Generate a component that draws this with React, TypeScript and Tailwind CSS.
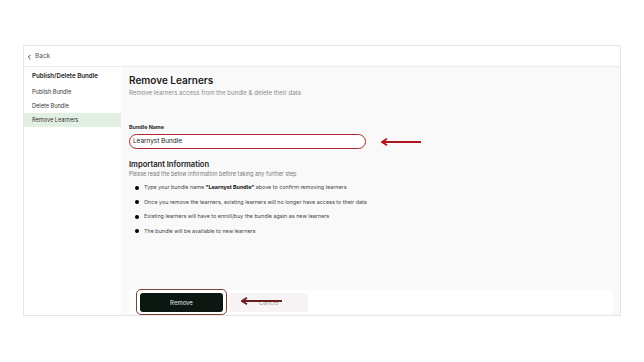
import React from 'react';

const font = { fontFamily: 'Inter, "Noto Sans", sans-serif' };

const LeftArrow: React.FC<{ width: number; color: string; className?: string }> = ({ width, color, className }) => (
  <svg className={className} width={width} height={8} viewBox={`0 0 ${width} 8`}>
    <line x1={2} y1={4} x2={width} y2={4} stroke={color} strokeWidth={1.8} />
    <path d="M6 0.8 L1 4 L6 7.2" fill="none" stroke={color} strokeWidth={1.8} strokeLinejoin="miter" />
  </svg>
);

const App: React.FC = () => {
  const menu = ['Publish Bundle', 'Delete Bundle', 'Remove Learners'];
  const bullets = [
    null,
    'Once you remove the learners, existing learners will no longer have access to their data',
    'Existing learners will have to enroll/buy the bundle again as new learners',
    'The bundle will be available to new learners',
  ];

  return (
    <div className="w-[644px] h-[362px] bg-white pt-[45px] pl-[23px]" style={font}>
      <div className="w-[598px] h-[271px] border border-[#e6e6e6] flex flex-col">
        <div className="h-[21px] shrink-0 border-b border-[#ececec] flex items-center pt-[2px] pl-[3px] gap-[3px] text-[6.5px] text-[#555]">
          <svg width="5" height="6" viewBox="0 0 5 6">
            <path d="M3.5 0.8 L1.3 3 L3.5 5.2" fill="none" stroke="#444" strokeWidth="1" />
          </svg>
          <span>Back</span>
        </div>
        <div className="flex flex-1">
          <div className="w-[97px] shrink-0 bg-white flex flex-col">
            <div className="h-[18px] pl-[8px] flex items-center text-[6.2px] font-semibold text-[#1a1a1a]">
              Publish/Delete Bundle
            </div>
            {menu.map((m, i) => (
              <div
                key={m}
                className={
                  i === 2
                    ? 'w-full h-[14px] pl-[8px] flex items-center text-[5.6px] text-[#333] bg-[#e2f0e4]'
                    : 'w-full h-[14px] pl-[8px] flex items-center text-[5.6px] text-[#333]'
                }
              >
                {m}
              </div>
            ))}
          </div>
          <div className="flex-1 min-w-0 bg-[#f9f9f9] flex flex-col">
            <div className="pl-[8px] pt-[7px] relative">
              <div className="text-[10px] leading-[12px] font-semibold text-[#1c1c1c]">Remove Learners</div>
              <div className="mt-[3px] text-[6.1px] leading-[8px] text-[#8a8a8a]">
                Remove learners access from the bundle &amp; delete their data
              </div>
              <div className="mt-[27px] text-[5.4px] leading-[6px] font-bold text-[#2a2a2a]">Bundle Name</div>
              <div className="relative mt-[4px] w-[237px] h-[15px] rounded-[8px] border-[1.5px] border-[#b3242e] bg-white flex items-center pl-[3px] text-[6.4px] text-[#222]">
                Learnyst Bundle
                <LeftArrow width={40} color="#b0141e" className="absolute left-[251px] top-[3px]" />
              </div>
              <div className="mt-[11px] text-[7.6px] leading-[9px] font-semibold text-[#1c1c1c]">Important Information</div>
              <div className="mt-[2px] text-[5.5px] leading-[7px] text-[#777]">
                Please read the below information before taking any further step
              </div>
              <div className="mt-[6px] flex flex-col gap-[7.5px] pl-[6px]">
                {bullets.map((b, i) => (
                  <div key={i} className="flex items-center h-[7px] gap-[5px] text-[5.4px] text-[#444]">
                    <span className="w-[4px] h-[4px] rounded-full bg-black" />
                    {b === null ? (
                      <span>
                        Type your bundle name <b className="text-[#111]">"Learnyst Bundle"</b> above to confirm removing learners
                      </span>
                    ) : (
                      <span>{b}</span>
                    )}
                  </div>
                ))}
              </div>
            </div>
            <div className="mt-auto ml-[8px] mr-[7px] mb-[1px] h-[24px] bg-white rounded-[3px] flex items-center pl-[11px] gap-[6px]">
              <div className="relative">
                <div className="absolute -left-[4px] -top-[4px] -right-[4px] -bottom-[3px] border border-[#7a4434] rounded-[5px]" />
                <div className="w-[83px] h-[19px] bg-[#0b1710] rounded-[3px] flex items-center justify-center text-[6px] text-[#e8e8e8]">
                  Remove
                </div>
              </div>
              <div className="relative w-[79px] h-[19px] bg-[#f8f3f5] rounded-[3px] flex items-center justify-center text-[6px] text-[#999]">
                Cancel
                <LeftArrow width={41} color="#6b1e1e" className="absolute left-[12px] top-[4px]" />
              </div>
            </div>
          </div>
        </div>
      </div>
    </div>
  );
};

export default App;
